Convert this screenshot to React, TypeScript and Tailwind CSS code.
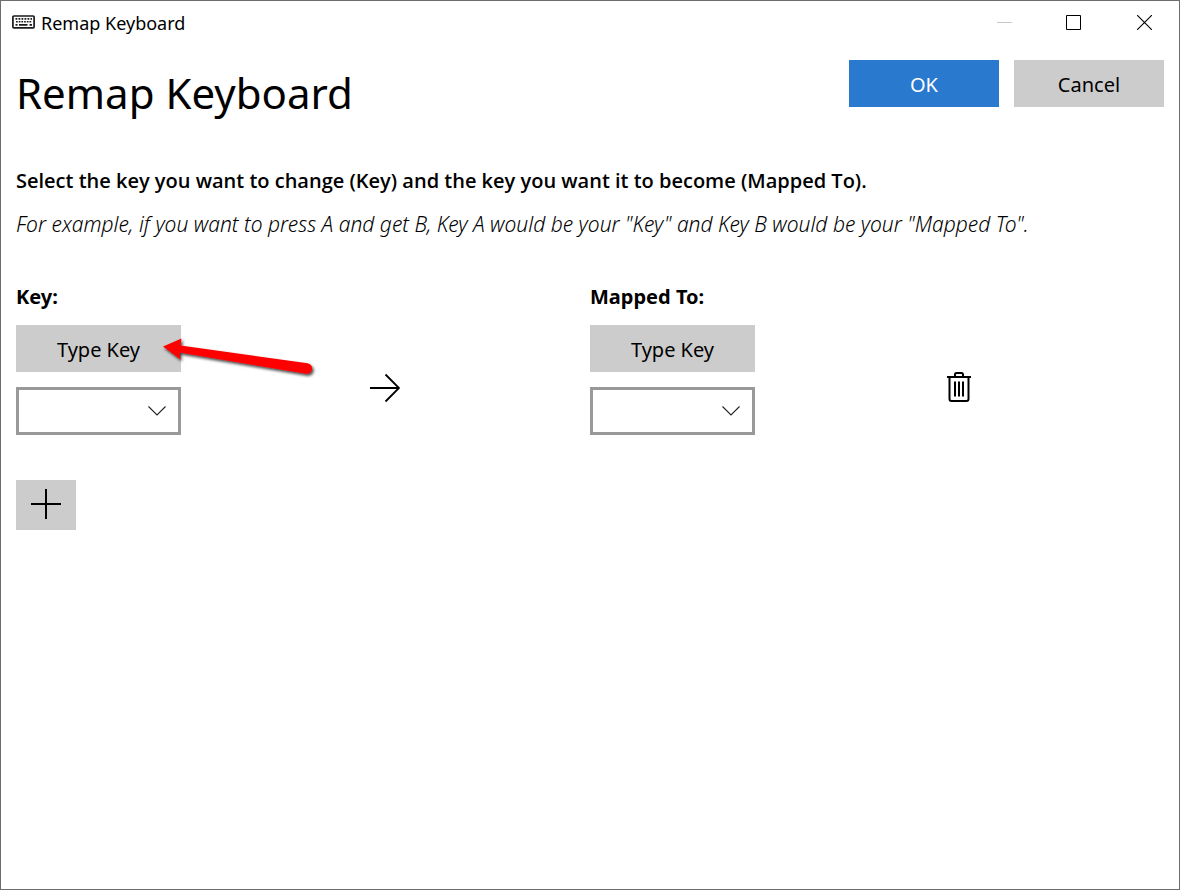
import type { ReactNode } from "react";

function KeyboardIcon() {
  return (
    <svg width="24" height="16" viewBox="0 0 24 16" fill="none" aria-hidden="true">
      <rect x="1.900" y="1" width="21.200" height="11.800" rx="1" stroke="#1a1a1a" strokeWidth="1.700" />
      <g stroke="#1a1a1a" strokeWidth="1.600">
        <path d="M4.500 3.900h16.500" strokeDasharray="1.800 1.200" />
        <path d="M5 6.800h15.500" strokeDasharray="1.700 1" />
        <path d="M4.500 9.900h2M8 9.900h8.500M18.500 9.900h2.500" />
      </g>
    </svg>
  );
}

function TitleBar() {
  return (
    <header className="flex h-11 justify-between pl-[10px]">
      <div className="flex items-center gap-[6px]">
        <KeyboardIcon />
        <span className="text-[18px] leading-6">Remap Keyboard</span>
      </div>
      <div className="flex h-[42px]">
        <button type="button" aria-label="Minimize" className="grid w-[68px] place-items-center">
          <svg width="15" height="15" viewBox="0 0 15 15" aria-hidden="true">
            <path d="M0 7.500h15" stroke="#c8c8c8" />
          </svg>
        </button>
        <button type="button" aria-label="Maximize" className="grid w-[71px] place-items-center">
          <svg width="15" height="15" viewBox="0 0 15 15" fill="none" aria-hidden="true">
            <path d="M.5.5h14v14H.5z" stroke="#000" />
          </svg>
        </button>
        <button type="button" aria-label="Close" className="grid w-[70px] place-items-center">
          <svg width="15" height="15" viewBox="0 0 15 15" aria-hidden="true">
            <path d="M0 0l15 15M15 0L0 15" stroke="#000" strokeWidth="1.100" />
          </svg>
        </button>
      </div>
    </header>
  );
}

function KeyPicker({ id, label, children }: { id: string; label: string; children?: ReactNode }) {
  return (
    <div className="relative flex flex-col gap-[15px]">
      <button type="button" className="h-[47px] bg-[#cccccc] pt-[2px] text-xl">
        Type Key
      </button>
      <div className="relative">
        <select
          id={id}
          aria-label={label}
          className="block h-12 w-full appearance-none border-3 border-[#999999] bg-white px-3 text-xl"
        >
          <option value=""></option>
          <option>A</option>
          <option>B</option>
        </select>
        <svg
          className="pointer-events-none absolute top-[18px] right-[15px]"
          width="18"
          height="11"
          viewBox="0 0 18 11"
          fill="none"
          aria-hidden="true"
        >
          <path d="M.5 1.500l8.500 8.500L17.500 1.500" stroke="#222" strokeWidth="1.100" />
        </svg>
      </div>
      {children}
    </div>
  );
}

function PointerArrow() {
  return (
    <svg
      className="pointer-events-none absolute top-[5px] left-[140px]"
      width="170"
      height="56"
      viewBox="0 0 170 56"
      aria-hidden="true"
    >
      <defs>
        <filter id="arrow-shadow" x="-10%" y="-20%" width="120%" height="160%">
          <feDropShadow dx="1.5" dy="2" stdDeviation="1.4" floodColor="#000" floodOpacity="0.75" />
        </filter>
      </defs>
      <path
        d="M7 16.500L25.500 8.500L24.500 15.500L151.500 33.200A5 5 0 0 1 150 43.800L23.500 22.500L24.500 29.500Z"
        fill="#fe0000"
        filter="url(#arrow-shadow)"
      />
    </svg>
  );
}

export default function App() {
  return (
    <div className="flex min-h-screen flex-col border border-[#6e6c6e] bg-white font-['Noto_Sans','Open_Sans',sans-serif] text-black">
      <TitleBar />
      <main className="flex flex-col px-[15px] pt-[15px]">
        <div className="flex items-start justify-between">
          <h1 className="text-[42px] leading-[66px]">Remap Keyboard</h1>
          <div className="flex gap-[15px] text-xl">
            <button type="button" className="h-[47px] w-[150px] bg-[#2979cf] pt-[2px] text-white">
              OK
            </button>
            <button type="button" className="h-[47px] w-[150px] bg-[#cccccc] pt-[2px]">
              Cancel
            </button>
          </div>
        </div>

        <div className="mt-[41px] flex flex-col gap-[15px]">
          <p className="font-['Open_Sans','Noto_Sans',sans-serif] text-xl leading-7 font-semibold">
            Select the key you want to change (Key) and the key you want it to become (Mapped To).
          </p>
          <p className="text-[21px] leading-7 font-light italic">
            For example, if you want to press A and get B, Key A would be your "Key" and Key B would be your
            "Mapped To".
          </p>
        </div>

        <div className="mt-[45px] grid grid-cols-[165px_1fr_165px_1fr] items-center gap-y-[14px]">
          <label htmlFor="source-key" className="text-xl leading-7 font-bold">
            Key:
          </label>
          <span />
          <label htmlFor="target-key" className="text-xl leading-7 font-bold">
            Mapped To:
          </label>
          <span />

          <KeyPicker id="source-key" label="Key:">
            <PointerArrow />
          </KeyPicker>
          <div className="flex justify-center pt-[15px] pr-px">
            <svg width="30" height="30" viewBox="0 0 30 30" fill="none" aria-hidden="true">
              <path d="M0 15h29M15.500 1.500L29 15L15.500 28.500" stroke="#000" strokeWidth="1.800" />
            </svg>
          </div>
          <KeyPicker id="target-key" label="Mapped To:" />
          <div className="flex justify-center pt-[13px] pr-px">
            <button type="button" aria-label="Delete">
              <svg width="26" height="32" viewBox="0 0 26 32" fill="none" aria-hidden="true">
                <g stroke="#000" strokeWidth="2">
                  <path d="M1 6h24M9 6V3.500a1.500 1.500 0 0 1 1.500-1.500h5a1.500 1.500 0 0 1 1.500 1.500V6" />
                  <path d="M3.500 6v22a2 2 0 0 0 2 2h15a2 2 0 0 0 2-2V6" />
                  <path d="M9 10.500v15M13 10.500v15M17 10.500v15" />
                </g>
              </svg>
            </button>
          </div>
        </div>

        <button
          type="button"
          aria-label="Add key mapping"
          className="mt-[45px] grid h-[50px] w-[60px] place-items-center bg-[#cccccc] pb-[2px]"
        >
          <svg width="30" height="30" viewBox="0 0 30 30" aria-hidden="true">
            <path d="M0 15h30M15 0v30" stroke="#000" strokeWidth="2" />
          </svg>
        </button>
      </main>
    </div>
  );
}
